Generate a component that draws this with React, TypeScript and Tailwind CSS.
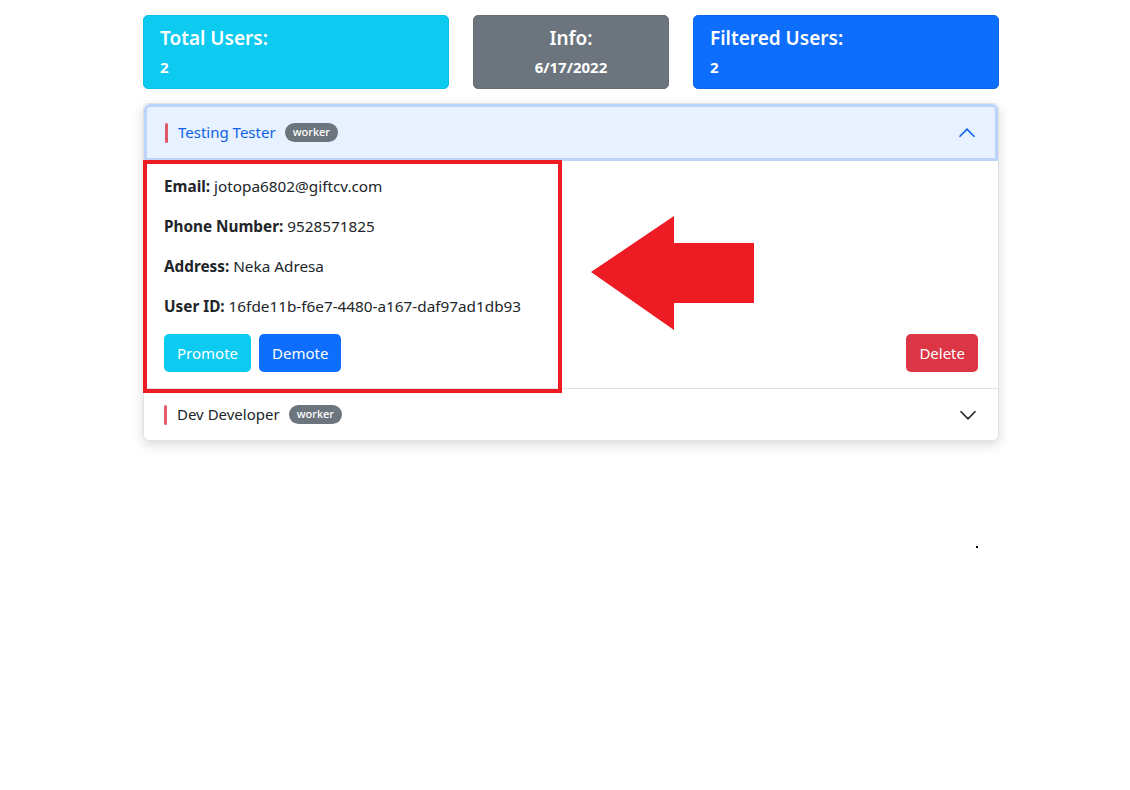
import React from "react";

const font = { fontFamily: '"Noto Sans", "Open Sans", sans-serif' };

function Chevron({ up, color }: { up?: boolean; color: string }) {
  return (
    <svg width="20" height="20" viewBox="0 0 16 16" fill="none">
      {up ? (
        <path d="M2 11 L8 5 L14 11" stroke={color} strokeWidth="1.3" />
      ) : (
        <path d="M2 5 L8 11 L14 5" stroke={color} strokeWidth="1.3" />
      )}
    </svg>
  );
}

export default function App() {
  return (
    <div className="relative min-h-[790px] w-[1130px] bg-white text-[#212529]" style={font}>
      <div className="ml-[143px] w-[856px] pt-[15px]">
        <div className="flex gap-[24px]">
          <div className="h-[74px] w-[306px] rounded-[5px] border border-[#0bbfe3] bg-[#0dcaf0] px-4 pt-[8px] text-white">
            <div className="text-[19px] font-semibold leading-[28px]">Total Users:</div>
            <div className="mt-[3px] text-[15px] font-bold leading-[24px]">2</div>
          </div>
          <div className="h-[74px] w-[196px] rounded-[5px] border border-[#656d74] bg-[#6c757d] pt-[8px] text-center text-white">
            <div className="text-[19px] font-semibold leading-[28px]">Info:</div>
            <div className="mt-[3px] text-[15px] font-bold leading-[24px]">6/17/2022</div>
          </div>
          <div className="h-[74px] w-[306px] rounded-[5px] border border-[#0c66ea] bg-[#0d6efd] px-4 pt-[8px] text-white">
            <div className="text-[19px] font-semibold leading-[28px]">Filtered Users:</div>
            <div className="mt-[3px] text-[15px] font-bold leading-[24px]">2</div>
          </div>
        </div>

        <div className="mt-[14px] rounded-[6px] border border-[#dee2e6] bg-white shadow-[0_4px_12px_rgba(0,0,0,0.15)]">
          <div className="flex h-[57px] items-center rounded-t-[6px] border-[3px] border-[#bcd3fa] bg-[#e7f1ff] pl-[18px] pr-[18px]">
            <div className="h-[20px] w-[3px] rounded bg-[#dc3545] opacity-80" />
            <span className="ml-[10px] text-[15px] text-[#0c63e4]">Testing Tester</span>
            <span className="ml-[9px] rounded-full bg-[#6c757d] px-[8px] pb-[2px] pt-[1px] text-[11px] font-medium leading-[16px] text-white">
              worker
            </span>
            <div className="ml-auto">
              <Chevron up color="#0c63e4" />
            </div>
          </div>
          <div className="relative px-[20px] pb-[16px] pt-[13px] text-[15.3px]">
            <p className="leading-[24px]"><b>Email:</b> jotopa6802@giftcv.com</p>
            <p className="mt-[16px] leading-[24px]"><b>Phone Number:</b> 9528571825</p>
            <p className="mt-[16px] leading-[24px]"><b>Address:</b> Neka Adresa</p>
            <p className="mt-[16px] leading-[24px]"><b>User ID:</b> 16fde11b-f6e7-4480-a167-daf97ad1db93</p>
            <div className="mt-[16px] flex items-center">
              <button className="h-[38px] rounded-[5px] bg-[#0dcaf0] px-[13px] text-[15px] text-white">Promote</button>
              <button className="ml-[8px] h-[38px] rounded-[5px] bg-[#0d6efd] px-[13px] text-[15px] text-white">Demote</button>
              <button className="ml-auto h-[38px] rounded-[5px] bg-[#dc3545] px-[13px] text-[15px] text-white">Delete</button>
            </div>
            <div className="pointer-events-none absolute left-[-1px] top-[-1px] h-[233px] w-[419px] border-[4px] border-[#ed1c24]" />
            <svg className="absolute left-[447px] top-[54px]" width="164" height="116" viewBox="0 0 164 116">
              <polygon points="0,57 83,1 83,28 163,28 163,88 83,88 83,115" fill="#ed1c24" />
            </svg>
          </div>
          <div className="flex h-[52px] items-center border-t border-[#dee2e6] pl-[20px] pr-[20px]">
            <div className="h-[20px] w-[3px] rounded bg-[#dc3545] opacity-80" />
            <span className="ml-[10px] text-[15px]">Dev Developer</span>
            <span className="ml-[9px] rounded-full bg-[#6c757d] px-[8px] pb-[2px] pt-[1px] text-[11px] font-medium leading-[16px] text-white">
              worker
            </span>
            <div className="ml-auto">
              <Chevron color="#212529" />
            </div>
          </div>
        </div>
      </div>
      <div className="absolute left-[976px] top-[546px] h-[2px] w-[2px] bg-black" />
    </div>
  );
}
